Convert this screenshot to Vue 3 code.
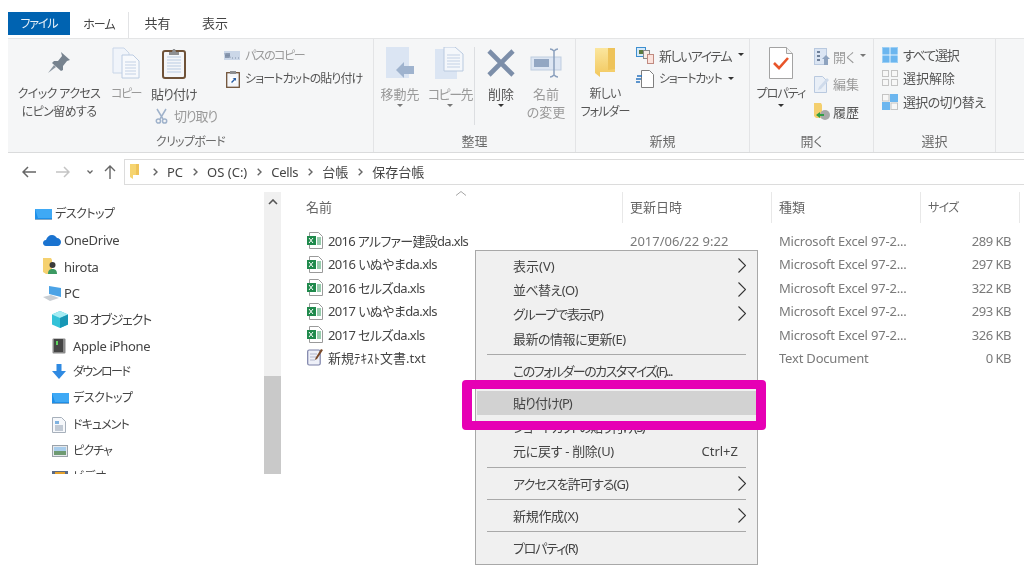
<script setup>
const navItems = [
  { label: 'デスクトップ', icon: 'desk', level: 0, cls: 'ka t5' },
  { label: 'OneDrive', icon: 'cloud', level: 1, cls: 't3' },
  { label: 'hirota', icon: 'user', level: 1, cls: 't3' },
  { label: 'PC', icon: 'pc', level: 1, cls: '' },
  { label: '3D オブジェクト', icon: 'cube', level: 2, cls: 't12' },
  { label: 'Apple iPhone', icon: 'phone', level: 2, cls: 't3' },
  { label: 'ダウンロード', icon: 'down', level: 2, cls: 'ka t15' },
  { label: 'デスクトップ', icon: 'desk', level: 2, cls: 'ka t5' },
  { label: 'ドキュメント', icon: 'doc', level: 2, cls: 'ka t9' },
  { label: 'ピクチャ', icon: 'pic', level: 2, cls: 'ka t9' },
  { label: 'ビデオ', icon: 'video', level: 2, cls: 'ka' }
]
const files = [
  { name: '2016 アルファー建設da.xls', date: '2017/06/22 9:22', type: 'Microsoft Excel 97-2...', size: '289 KB', cls: 't7' },
  { name: '2016 いぬやまda.xls', date: '', type: 'Microsoft Excel 97-2...', size: '297 KB', cls: 't6' },
  { name: '2016 セルズda.xls', date: '', type: 'Microsoft Excel 97-2...', size: '322 KB', cls: 't6' },
  { name: '2017 いぬやまda.xls', date: '', type: 'Microsoft Excel 97-2...', size: '293 KB', cls: 't6' },
  { name: '2017 セルズda.xls', date: '', type: 'Microsoft Excel 97-2...', size: '326 KB', cls: 't6' },
  { name: '新規ﾃｷｽﾄ文書.txt', date: '', type: 'Text Document', size: '0 KB', txt: true, cls: '' }
]
const menu = [
  { label: '表示(V)', sub: true },
  { label: '並べ替え(O)', sub: true, cls: 't6' },
  { label: 'グループで表示(P)', sub: true, cls: 't12' },
  { label: '最新の情報に更新(E)', cls: 't5' },
  { sep: true },
  { label: 'このフォルダーのカスタマイズ(F)...', cls: 't15' },
  { sep: true },
  { label: '貼り付け(P)', active: true, cls: 't9' },
  { label: 'ショートカットの貼り付け(S)', cls: 't15' },
  { label: '元に戻す - 削除(U)', key: 'Ctrl+Z', cls: 't3' },
  { sep: true },
  { label: 'アクセスを許可する(G)', sub: true, cls: 't9' },
  { sep: true },
  { label: '新規作成(X)', sub: true, cls: 't3' },
  { sep: true },
  { label: 'プロパティ(R)', cls: 't12' }
]
const crumbs = ['PC', 'OS (C:)', 'Cells', '台帳', '保存台帳']
</script>

<template>
  <div class="win">
    <div class="tabs">
      <div class="tab file"><span class="ka t11">ファイル</span></div>
      <div class="tab home"><span class="ka t9">ホーム</span></div>
      <div class="tab share">共有</div>
      <div class="tab view">表示</div>
    </div>

    <div class="ribbon">
      <section class="group g1">
        <div class="body">
          <div class="big pin">
            <div class="ico">
              <svg width="24" height="24" viewBox="0 0 24 24"><path d="M14 1l9 8-3 1-4 5 0 4-2 1-9-8 2-2 4 0 4-5z" fill="#77838f"/><path d="M7 14L1 22l8-6z" fill="#8b96a1"/></svg>
            </div>
            <div class="txt ka t6">クイック アクセス<br>にピン留めする</div>
          </div>
          <div class="stack">
            <div class="pair">
              <div class="big copy dim">
                <div class="ico">
                  <svg width="28" height="32" viewBox="0 0 28 32"><path d="M1 1h11l5 5v20H1z" fill="#f0f4fa" stroke="#c9d6e8"/><path d="M10 8h11l6 6v17H10z" fill="#f7f9fc" stroke="#bccce2"/><path d="M13 15h11M13 18h11M13 21h11M13 24h11M13 27h11" stroke="#c3d1e5"/></svg>
                </div>
                <div class="txt ka t15">コピー</div>
              </div>
              <div class="big paste">
                <div class="ico">
                  <svg width="24" height="32" viewBox="0 0 24 32"><rect x="1" y="4" width="22" height="27" rx="2" fill="#f4f6f9" stroke="#6f5238" stroke-width="2"/><path d="M5 10h14M5 13h14M5 16h14M5 19h14M5 22h14M5 25h14" stroke="#b9cbe2"/><path d="M7 5h3l1-3h2l1 3h3v3H7z" fill="#8d8f92"/></svg>
                </div>
                <div class="txt t9">貼り付け</div>
              </div>
            </div>
            <div class="small cut dim">
              <svg width="13" height="16" viewBox="0 0 13 16" fill="none" stroke="#9fb2cb" stroke-width="1.5"><path d="M2 1l6 10M11 1L5 11"/><circle cx="3.4" cy="13" r="2.1"/><circle cx="9.6" cy="13" r="2.1"/></svg>
              <span class="t12">切り取り</span>
            </div>
          </div>
          <div class="col-small c-path">
            <div class="small dim">
              <svg width="16" height="9" viewBox="0 0 16 9"><rect width="16" height="9" fill="#cbd7e8"/><path d="M1 2l1 5 1-5 1 5 1-5 1 5M8 7h1M11 7h1M14 7h1" stroke="#5d6f89" fill="none" stroke-width=".7"/></svg>
              <span class="ka t15">パスのコピー</span>
            </div>
            <div class="small">
              <svg width="14" height="17" viewBox="0 0 14 17"><rect x=".7" y="1.7" width="12.6" height="14.6" fill="#f4f6f9" stroke="#6f5238" stroke-width="1.3"/><rect x="4" y="0" width="6" height="3" fill="#8d8f92"/><rect x="4" y="6" width="6" height="6" fill="#fff"/><path d="M5 11l3-3-1.5-1H10v3L9 9l-3 3z" fill="#2a5fa5"/></svg>
              <span class="ka t9">ショートカットの貼り付け</span>
            </div>
          </div>
        </div>
        <div class="label"><span class="ka t7">クリップボード</span></div>
      </section>

      <section class="group g2">
        <div class="body">
          <div class="big move dim">
            <div class="ico">
              <svg width="30" height="32" viewBox="0 0 30 32"><rect x="1" y="0" width="23" height="31" fill="#dbe5f3"/><path d="M11 23l8-8v4h10v8H19v4z" fill="#9fb3ce"/></svg>
            </div>
            <div class="txt">移動先<i class="caret"></i></div>
          </div>
          <div class="big copyto dim">
            <div class="ico">
              <svg width="30" height="32" viewBox="0 0 30 32"><rect x="0" y="2" width="22" height="30" fill="#dbe5f3"/><path d="M9 0h11l8 7v17H9z" fill="#f4f7fb" stroke="#b9c9df"/><path d="M12 8h13M12 11h13M12 14h13M12 17h13M12 20h13" stroke="#c3d1e5"/></svg>
            </div>
            <div class="txt t15">コピー先<i class="caret"></i></div>
          </div>
          <div class="vline"></div>
          <div class="big del">
            <div class="ico">
              <svg width="30" height="30" viewBox="0 0 30 30"><path d="M3 3l24 24M27 3L3 27" stroke="#7c8ea9" stroke-width="4.6"/></svg>
            </div>
            <div class="txt">削除<i class="caret"></i></div>
          </div>
          <div class="big rename dim">
            <div class="ico">
              <svg width="32" height="30" viewBox="0 0 32 30"><rect x="1" y="9" width="30" height="13" fill="#dde6f3" stroke="#bfcde0"/><rect x="4" y="11" width="15" height="8" fill="#93a7c3"/><path d="M20 1c2 0 3 1 4 2 1-1 2-2 4-2M24 3v24M20 29c2 0 3-1 4-2 1 1 2 2 4 2" fill="none" stroke="#8ba0bd" stroke-width="1.5"/></svg>
            </div>
            <div class="txt">名前<br>の変更</div>
          </div>
        </div>
        <div class="label">整理</div>
      </section>

      <section class="group g3">
        <div class="body">
          <div class="big newf">
            <div class="ico">
              <svg width="22" height="30" viewBox="0 0 22 30"><defs><linearGradient id="fy" x1="0" y1="0" x2="0" y2="1"><stop offset="0" stop-color="#fbe69e"/><stop offset="1" stop-color="#f2c75c"/></linearGradient></defs><path d="M1 0h20v24H6v5l-5-4z" fill="url(#fy)"/><path d="M14 0h7v21l-7 1z" fill="#eec35a"/></svg>
            </div>
            <div class="txt ka t9">新しい<br>フォルダー</div>
          </div>
          <div class="col-small c-new">
            <div class="small">
              <svg width="18" height="17" viewBox="0 0 18 17"><rect x=".5" y=".5" width="9" height="9" fill="#d6e9f8" stroke="#3d8fd0"/><rect x="3" y="3" width="4" height="4" fill="#5a7a3f"/><rect x="7.5" y="3.5" width="6" height="8" fill="#f7ece6" stroke="#8a8a8a"/><rect x="11.5" y="7.5" width="6" height="9" fill="#fbe2dc" stroke="#c08a80"/></svg>
              <span class="t15">新しいアイテム</span><i class="caret in"></i>
            </div>
            <div class="small">
              <svg width="18" height="18" viewBox="0 0 18 18"><path d="M5.5.5h8l4 4v13h-12z" fill="#fff" stroke="#7f7f7f"/><path d="M0 9h5M1 6h5M0 12h4" stroke="#2a74c0" stroke-width="1.5"/></svg>
              <span class="ka t12">ショートカット</span><i class="caret in"></i>
            </div>
          </div>
        </div>
        <div class="label">新規</div>
      </section>

      <section class="group g4">
        <div class="body">
          <div class="big prop">
            <div class="ico">
              <svg width="24" height="32" viewBox="0 0 24 32"><path d="M.5.5h17l6 6v25H.5z" fill="#fff" stroke="#a3a3a3"/><path d="M17.5.5v6h6" fill="#f0f0f0" stroke="#a3a3a3"/><path d="M5 16l5 5 9-10" fill="none" stroke="#e8552a" stroke-width="2.6"/></svg>
            </div>
            <div class="txt ka t9">プロパティ<i class="caret"></i></div>
          </div>
          <div class="col-small c-open">
            <div class="small dim">
              <svg width="16" height="17" viewBox="0 0 16 17"><rect x=".5" y=".5" width="12" height="16" fill="#dbe5f3" stroke="#b9c9df"/><path d="M3 3h3v2H3zM3 7h3v2H3zM3 11h3v2H3z" fill="#6f8099"/><path d="M8 11l4-4 4 4h-2v6h-4v-6z" fill="#8ea3bf"/></svg>
              <span>開く</span><i class="caret in"></i>
            </div>
            <div class="small dim">
              <svg width="16" height="17" viewBox="0 0 16 17"><path d="M.5.5h8l4 4v12H.5z" fill="#e9eff7" stroke="#b9c9df"/><path d="M5 11L13 2l2 2-8 9-3 1z" fill="#cfdbeb"/></svg>
              <span>編集</span>
            </div>
            <div class="small">
              <svg width="16" height="17" viewBox="0 0 16 17"><path d="M0 0h7l1 2v13H2l-2-2z" fill="#f4cf6e"/><circle cx="11" cy="12" r="5" fill="#a8a8a8"/><path d="M2 12l4-3v2h4v2H6v2z" fill="#2f9e44"/></svg>
              <span>履歴</span>
            </div>
          </div>
        </div>
        <div class="label">開く</div>
      </section>

      <section class="group g5">
        <div class="body">
          <div class="col-small c-sel">
            <div class="small">
              <svg width="16" height="16" viewBox="0 0 16 16"><rect x=".5" y=".5" width="15" height="15" fill="#6cb6ef" stroke="#9ccff5"/><path d="M8 0v16M0 8h16" stroke="#e8f4fd"/></svg>
              <span class="t12">すべて選択</span>
            </div>
            <div class="small">
              <svg width="16" height="16" viewBox="0 0 16 16" fill="#f7f7f7" stroke="#c4c4c4"><rect x=".5" y=".5" width="6" height="6"/><rect x="9.5" y=".5" width="6" height="6"/><rect x=".5" y="9.5" width="6" height="6"/><rect x="9.5" y="9.5" width="6" height="6"/></svg>
              <span>選択解除</span>
            </div>
            <div class="small">
              <svg width="16" height="16" viewBox="0 0 16 16"><rect x=".5" y=".5" width="6.5" height="6.5" fill="#f7f7f7" stroke="#c4c4c4"/><rect x="8" y="0" width="8" height="8" fill="#6cb6ef"/><rect x="0" y="8" width="8" height="8" fill="#6cb6ef"/><rect x="9" y="9" width="6.5" height="6.5" fill="#f7f7f7" stroke="#c4c4c4"/></svg>
              <span class="t7">選択の切り替え</span>
            </div>
          </div>
        </div>
        <div class="label">選択</div>
      </section>
    </div>

    <div class="addr">
      <div class="navbtns">
        <svg width="14" height="12" viewBox="0 0 14 12" fill="none" stroke="#666" stroke-width="1.5"><path d="M14 6H1M6 1L1 6l5 5"/></svg>
        <svg class="fwd" width="14" height="12" viewBox="0 0 14 12" fill="none" stroke="#c4c4c4" stroke-width="1.5"><path d="M0 6h13M8 1l5 5-5 5"/></svg>
        <svg class="rec" width="6" height="4" viewBox="0 0 6 4" fill="none" stroke="#666" stroke-width="1.3"><path d="M.5.5L3 3 5.5.5"/></svg>
        <svg class="up" width="12" height="14" viewBox="0 0 12 14" fill="none" stroke="#666" stroke-width="1.4"><path d="M6 14V1M1 6l5-5 5 5"/></svg>
      </div>
      <div class="box">
        <svg class="crumbfolder" width="10" height="15" viewBox="0 0 10 15"><path d="M0 0h9v11H3v4l-3-2z" fill="#f6d470"/><path d="M6 0h3v11H6z" fill="#eec35a"/></svg>
        <template v-for="c in crumbs" :key="c">
          <svg class="sep" width="5" height="8" viewBox="0 0 5 8" fill="none" stroke="#666" stroke-width="1.4"><path d="M.7.7L4 4 .7 7.3"/></svg>
          <span :class="['crumb', { t3: c === 'Cells' }]">{{ c }}</span>
        </template>
      </div>
    </div>

    <div class="main">
      <nav class="nav">
        <ul class="tree">
          <li v-for="(n, i) in navItems" :key="i" :class="['lvl' + n.level]">
            <span class="ni">
              <svg v-if="n.icon === 'desk'" width="17" height="11" viewBox="0 0 17 11"><rect width="17" height="11" fill="#1e8fe8"/><path d="M0 0h17v9L3 9z" fill="#3fa9f5"/><path d="M0 10.5h17" stroke="#86a9c6"/></svg>
              <svg v-else-if="n.icon === 'cloud'" width="18" height="11" viewBox="0 0 18 11"><path d="M3 11C1 11 0 9.5 0 8s1-3 3-3c1-3 3-5 6-5 2.5 0 4 1.5 5 3 2 0 4 2 4 4s-1.5 4-3.5 4z" fill="#1a73d0"/></svg>
              <svg v-else-if="n.icon === 'user'" width="15" height="17" viewBox="0 0 15 17"><path d="M0 0h8l1 2v14H3l-3-2z" fill="#f5d170"/><circle cx="9.5" cy="7" r="3" fill="#3a3a3a"/><path d="M5 16c0-4 2-5 4.5-5S14 12 14 16z" fill="#3c9a63"/></svg>
              <svg v-else-if="n.icon === 'pc'" width="18" height="15" viewBox="0 0 18 15"><path d="M6 0l12 2v9l-12-3z" fill="#4ba3e6"/><path d="M0 11l8-2 8 3-9 3z" fill="#c9ced3"/></svg>
              <svg v-else-if="n.icon === 'cube'" width="16" height="17" viewBox="0 0 16 17"><path d="M8 0l8 3.5v10L8 17 0 13.5v-10z" fill="#33c2d8"/><path d="M8 0l8 3.5-8 3.5-8-3.5z" fill="#a5ecf3"/><path d="M8 7l8-3.5v10L8 17z" fill="#1797b5"/></svg>
              <svg v-else-if="n.icon === 'phone'" width="14" height="16" viewBox="0 0 14 16"><rect x=".5" y=".5" width="13" height="15" rx="1" fill="#8a8a8a"/><rect x="2" y="1" width="9" height="13" fill="#454545"/><rect x="4" y="3" width="2" height="4" fill="#5fd35f"/></svg>
              <svg v-else-if="n.icon === 'down'" width="14" height="15" viewBox="0 0 14 15"><path d="M4.5 0h5v7H14l-7 8-7-8h4.5z" fill="#2f8ae2"/></svg>
              <svg v-else-if="n.icon === 'doc'" width="14" height="16" viewBox="0 0 14 16"><path d="M.5.5h9l4 4v11H.5z" fill="#f6f8fb" stroke="#a7b0bb"/><path d="M3 4h4v3H3z" fill="#7fb2e0"/><path d="M3 9h8M3 11h8M3 13h8" stroke="#8b9aad"/></svg>
              <svg v-else-if="n.icon === 'pic'" width="16" height="12" viewBox="0 0 16 12"><rect x=".5" y=".5" width="15" height="11" fill="#e6e9ec" stroke="#9aa2aa"/><rect x="2" y="2" width="12" height="4" fill="#a8cdec"/><path d="M2 6h12v4H2z" fill="#6e9a72"/></svg>
              <svg v-else width="16" height="12" viewBox="0 0 16 12"><rect width="16" height="12" fill="#5b6a85"/><rect x="3" y="1" width="10" height="9" fill="#e4a12d"/></svg>
            </span>
            <span :class="n.cls">{{ n.label }}</span>
          </li>
        </ul>
        <div class="scroll">
          <svg class="sarrow" width="10" height="6" viewBox="0 0 10 6" fill="none" stroke="#555" stroke-width="1.6"><path d="M1 5l4-4 4 4"/></svg>
          <div class="thumb"></div>
        </div>
      </nav>

      <div class="list">
        <div class="head">
          <div class="hc hname">名前
            <svg class="sortc" width="12" height="5" viewBox="0 0 12 5" fill="none" stroke="#a5a5a5"><path d="M1 4.5L6 .5l5 4"/></svg>
          </div>
          <div class="hc">更新日時</div>
          <div class="hc">種類</div>
          <div class="hc"><span class="ka t7">サイズ</span></div>
        </div>
        <div class="rows">
          <div v-for="f in files" :key="f.name" class="row">
            <div class="fname">
              <svg v-if="!f.txt" width="16" height="17" viewBox="0 0 16 17"><path d="M2.5.5h9l4 4v12h-13z" fill="#fff" stroke="#9a9a9a"/><rect x="0" y="4" width="9" height="9" fill="#1f8a4c"/><path d="M2 6l4 5M6 6l-4 5" stroke="#fff"/><path d="M10 6h4M10 8h4M10 10h4M10 12h4" stroke="#2d9b5b"/></svg>
              <svg v-else width="16" height="17" viewBox="0 0 16 17"><rect x=".7" y="1" width="12.5" height="15" rx="1.5" fill="#eef0f8" stroke="#7b80a8" stroke-width="1.2"/><path d="M3 5h7M3 8h7M3 11h5" stroke="#b4b8cc"/><path d="M14 0l2 1-6 9-2 1 .5-2z" fill="#7a4a2a"/></svg>
              <span :class="f.cls">{{ f.name }}</span>
            </div>
            <div class="gray">{{ f.date }}</div>
            <div class="gray ty">{{ f.type }}</div>
            <div class="gray size">{{ f.size }}</div>
          </div>
        </div>
      </div>
    </div>

    <div class="menu">
      <template v-for="(m, i) in menu" :key="i">
        <div v-if="m.sep" class="msep"></div>
        <div v-else :class="['mi', { on: m.active }]">
          <span :class="m.cls">{{ m.label }}</span>
          <span v-if="m.key" class="mkey">{{ m.key }}</span>
          <svg v-if="m.sub" class="mchev" width="8" height="15" viewBox="0 0 8 15" fill="none" stroke="#333" stroke-width="1.1"><path d="M.5.5l7 7-7 7"/></svg>
        </div>
      </template>
    </div>
    <div class="mark"></div>
  </div>
</template>

<style>
html, body { margin: 0; background: #fff; overflow: hidden; }
</style>

<style scoped>
.win {
  position: relative;
  width: 1024px;
  height: 571px;
  overflow: hidden;
  background: #fff;
  color: #444;
  font: 13px/18px "Noto Sans", "Noto Sans CJK JP", sans-serif;
  font-feature-settings: "palt";
  filter: blur(.35px);
}
.ka { font-size: 12px; }
.t3 { letter-spacing: -.3px; }
.t5 { letter-spacing: -.5px; }
.t6 { letter-spacing: -.6px; }
.t7 { letter-spacing: -.7px; }
.t9 { letter-spacing: -.9px; }
.t11 { letter-spacing: -1.1px; }
.t12 { letter-spacing: -1.2px; }
.t15 { letter-spacing: -1.5px; }

.tabs { display: flex; height: 26px; padding: 12px 0 0 8px; align-items: flex-start; }
.tab { height: 23px; line-height: 23px; text-align: center; }
.tab.file { width: 62px; background: #0063b1; color: #e8f1f9; }
.tab.home { width: 59px; height: 26px; line-height: 25px; border-right: 1px solid #e2e3e5; box-sizing: border-box; margin-bottom: -1px; position: relative; z-index: 1; background: #fff; }
.tab.share { width: 57px; }
.tab.view { width: 58px; }

.ribbon {
  display: flex;
  height: 115px;
  margin-left: 8px;
  background: #f5f6f7;
  border-top: 1px solid #e4e5e6;
  border-bottom: 1px solid #dadbdc;
  box-sizing: border-box;
  color: #555;
}
.group { display: flex; flex-direction: column; box-sizing: border-box; border-right: 1px solid #e3e4e6; }
.g1 { width: 366px; }
.g2 { width: 202px; }
.g3 { width: 174px; }
.g4 { width: 124px; }
.g5 { width: 122px; }
.body { flex: 1; display: flex; min-height: 0; }
.label { height: 24px; line-height: 27px; text-align: center; color: #6b6b6b; }

.big { display: flex; flex-direction: column; align-items: center; text-align: center; white-space: nowrap; }
.ico { height: 46px; display: flex; align-items: center; justify-content: center; box-sizing: border-box; padding-top: 2px; }
.txt { position: relative; }
.dim { color: #9a9a9a; }
.caret { display: block; width: 0; height: 0; margin: 1px auto 0; border: 3px solid transparent; border-top: 3px solid #333; border-bottom: 0; }
.dim .caret { border-top-color: #777; }
.caret.in { display: inline-block; margin: 0 0 2px 2px; vertical-align: middle; }

.small { display: flex; align-items: center; gap: 5px; white-space: nowrap; height: 23.5px; }
.small svg { flex: none; }
.col-small { display: flex; flex-direction: column; padding-top: 5px; }

.pin { width: 90px; margin-left: 6px; }
.stack { display: flex; flex-direction: column; width: 96px; }
.pair { display: flex; }
.copy { width: 44px; }
.paste { width: 52px; }
.pair .big { height: 67px; }
.cut { padding-left: 51px; height: 20px; gap: 6px; }
.c-path { margin-left: 24px; }
.c-path .small:last-child svg { margin-left: 2px; }

.move { width: 52px; }
.copyto { width: 48px; }
.vline { width: 1px; height: 78px; background: #dcdee1; margin: 8px 0 0 0; }
.del { width: 52px; }
.rename { width: 38px; }
.newf { width: 58px; }
.c-new { margin-left: 2px; gap: 0; }
.prop { width: 62px; }
.c-open { padding-top: 6px; margin-left: 2px; gap: 4px; }
.c-open .small { gap: 3px; }
.c-sel { margin-left: 8px; padding-top: 4px; }

.addr { display: flex; height: 37px; align-items: center; box-sizing: border-box; }
.navbtns { display: flex; align-items: center; width: 124px; padding-left: 22px; box-sizing: border-box; }
.fwd { margin-left: 20px; }
.rec { margin-left: 17px; }
.up { margin-left: 11px; }
.box { flex: 1; height: 26px; display: flex; align-items: center; border: 1px solid #dcdcdc; border-right: 0; box-sizing: border-box; padding-left: 5px; }
.crumbfolder { margin-right: 13px; }
.sep { margin-right: 9px; }
.crumb { margin-right: 10px; color: #444; }

.main { display: flex; height: 284px; }
.nav { display: flex; width: 273px; margin-left: 8px; flex: none; }
.tree { list-style: none; margin: 0; padding: 11px 0 0; flex: 1; overflow: hidden; }
.tree li { display: flex; align-items: center; height: 26.3px; white-space: nowrap; }
.ni { width: 20px; flex: none; display: flex; align-items: center; }
.lvl0 { padding-left: 27px; }
.lvl1 { padding-left: 35px; }
.lvl1 .ni { width: 21px; }
.lvl2 { padding-left: 44px; }
.lvl2 .ni { width: 21px; }
.scroll { width: 17px; flex: none; margin-top: 2px; background: #f0f0f0; display: flex; flex-direction: column; align-items: center; justify-content: space-between; }
.sarrow { margin-top: 7px; }
.thumb { width: 100%; height: 98px; background: #c9c9c9; }

.list { flex: 1; padding: 2px 0 0 18px; min-width: 0; }
.head { display: grid; grid-template-columns: 324px 149px 149px 99px; height: 30px; }
.hc { position: relative; padding-left: 7px; line-height: 30px; color: #666; border-right: 1px solid #e8e8e8; }
.sortc { position: absolute; left: 156px; top: -1px; }
.rows { padding-top: 7.3px; }
.row { display: grid; grid-template-columns: 324px 149px 149px 99px; height: 23.4px; align-items: center; white-space: nowrap; }
.fname { display: flex; align-items: center; gap: 5px; padding-left: 8px; color: #444; }
.fname svg { flex: none; }
.gray { padding-left: 7px; color: #7a7a7a; }
.ty { letter-spacing: -.2px; }
.size { text-align: right; padding-right: 9px; letter-spacing: -.5px; }

.menu {
  position: absolute;
  left: 475px;
  top: 250px;
  width: 283px;
  height: 315px;
  box-sizing: border-box;
  padding: 3px 1px;
  background: #f0f0f0;
  border: 1px solid #a8a8a8;
  color: #444;
}
.mi { position: relative; height: 24.2px; line-height: 24px; padding-left: 36px; white-space: nowrap; }
.mi.on { background: #d2d2d2; }
.msep { height: 1px; margin: 3.5px 10px; background: #a9a9a9; }
.mkey { position: absolute; right: 18px; }
.mchev { position: absolute; right: 10px; top: 4px; }
.mark {
  position: absolute;
  left: 462px;
  top: 380px;
  width: 304px;
  height: 50px;
  box-sizing: border-box;
  border: 10px solid #e600b4;
  border-width: 9px 10px;
  border-radius: 4px;
}
</style>
